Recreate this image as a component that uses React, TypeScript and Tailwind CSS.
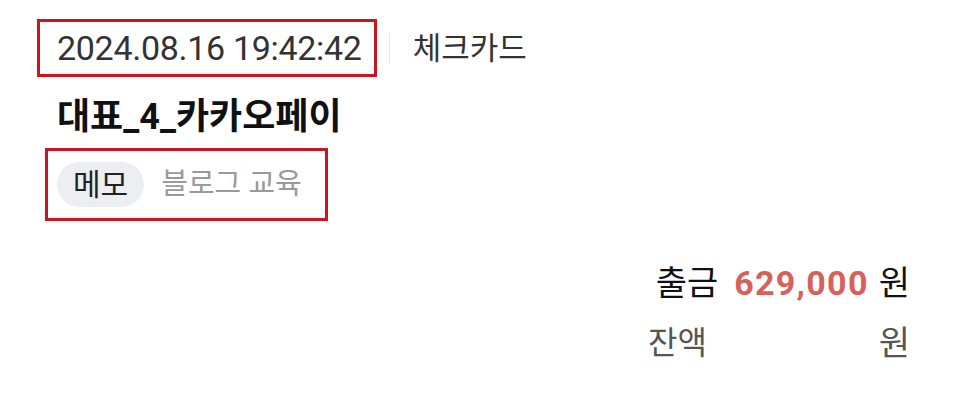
const font = { fontFamily: "Roboto, 'Noto Sans CJK KR', sans-serif" };

export default function App() {
  return (
    <div className="w-[966px] h-[411px] bg-white overflow-hidden" style={font}>
      <div className="pl-[57px] pr-[56px] pt-[19px]">
        {/* date + card type */}
        <div className="flex items-center">
          <div className="-ml-[20px] border-[3px] border-[#c8171e] pl-[17px] pr-[12px] h-[58px] flex items-center">
            <span className="text-[34px] leading-none text-[#333333] tracking-[-0.3px]">
              2024.08.16 19:42:42
            </span>
          </div>
          <div className="ml-[12px] w-px h-[31px] bg-[#e6e6e6]" />
          <span className="ml-[23px] text-[31px] leading-none text-[#333333]">체크카드</span>
        </div>

        {/* merchant */}
        <h1 className="mt-[20px] text-[36px] leading-[40px] font-bold text-[#111111]">
          대표_4_카카오페이
        </h1>

        {/* memo */}
        <div className="mt-[11px] -ml-[12px] w-fit border-[3px] border-[#c8171e] h-[73px] pl-[9px] pr-[23px] flex items-center">
          <span className="h-[45px] px-[16px] rounded-full bg-[#eceef1] text-[30px] leading-[45px] text-[#222222]">
            메모
          </span>
          <span className="ml-[17px] text-[29px] leading-none text-[#9a9a9a]">블로그 교육</span>
        </div>

        {/* amounts */}
        <div className="ml-auto w-[262px] mt-[40px]">
          <div className="flex items-center justify-end h-[44px]">
            <span className="text-[34px] leading-none text-[#111111]">출금</span>
            <span className="ml-[16px] text-[34px] leading-none font-bold text-[#d9605a] tracking-[1.3px]">
              629,000
            </span>
            <span className="ml-[10px] text-[34px] leading-none text-[#111111]">원</span>
          </div>
          <div className="mt-[16px] flex items-center justify-between h-[44px]">
            <span className="text-[32px] leading-none text-[#555555]">잔액</span>
            <span className="text-[34px] leading-none text-[#555555]">원</span>
          </div>
        </div>
      </div>
    </div>
  );
}
